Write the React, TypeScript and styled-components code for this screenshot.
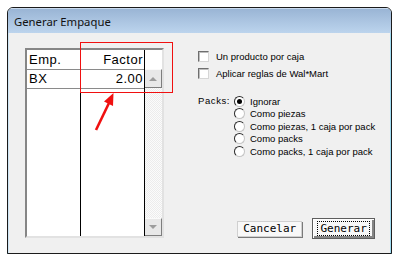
import styled, { createGlobalStyle } from 'styled-components';

const GlobalStyle = createGlobalStyle`
    body {
        margin: 0;
        background: #ffffff;
    }
`;

const packOptions = [
    'Ignorar',
    'Como piezas',
    'Como piezas, 1 caja por pack',
    'Como packs',
    'Como packs, 1 caja por pack',
];

const App = () => {
    return (
        <>
            <GlobalStyle />
            <Window>
                <TitleBar>Generar Empaque</TitleBar>
                <Body>
                    <Grid>
                        <Column width={54}>
                            <HeaderCell>Emp.</HeaderCell>
                            <RowCell>BX</RowCell>
                        </Column>
                        <Column width={64} align="right">
                            <HeaderCell>Factor</HeaderCell>
                            <RowCell>2.00</RowCell>
                        </Column>
                        <ScrollBar>
                            <ScrollCap />
                            <ScrollButton height={19}>
                                <Arrow />
                            </ScrollButton>
                            <ScrollTrack />
                            <ScrollButton height={18}>
                                <Arrow down />
                            </ScrollButton>
                        </ScrollBar>
                    </Grid>

                    <Options>
                        <CheckRow>
                            <CheckBox />
                            <Label>Un producto por caja</Label>
                        </CheckRow>
                        <CheckRow>
                            <CheckBox />
                            <Label>Aplicar reglas de Wal*Mart</Label>
                        </CheckRow>

                        <PacksGroup>
                            <PacksLabel>Packs:</PacksLabel>
                            <RadioList>
                                {packOptions.map((option, i) => (
                                    <RadioRow key={option}>
                                        <Radio checked={i === 0} />
                                        <Label>{option}</Label>
                                    </RadioRow>
                                ))}
                            </RadioList>
                        </PacksGroup>

                        <ButtonRow>
                            <Button>Cancelar</Button>
                            <DefaultButton>
                                <FocusRing>Generar</FocusRing>
                            </DefaultButton>
                        </ButtonRow>
                    </Options>

                    <Highlight />
                    <Pointer width="24" height="42" viewBox="0 0 24 42">
                        <line x1="3" y1="39" x2="16" y2="12" stroke="#f01010" strokeWidth="2.6" />
                        <polygon points="20.5,2 20,15 11,10.5" fill="#f01010" />
                    </Pointer>
                </Body>
            </Window>
        </>
    );
};

const Window = styled.div`
    margin: 7px 0 0 7px;
    width: 385px;
    height: 247px;
    box-sizing: border-box;
    border: 1px solid #1b1b1b;
    border-radius: 6px 6px 0 0;
    overflow: hidden;
    box-shadow: 0 1px 0 #3fb6e2;
    background: #f0f0f0;
`;

const TitleBar = styled.div`
    height: 25px;
    display: flex;
    align-items: center;
    padding-left: 6px;
    background: linear-gradient(#9ab5d5, #bcd4ed);
    border-top: 1px solid #c9daee;
    box-sizing: border-box;
    font-family: 'Noto Sans', 'Open Sans', sans-serif;
    font-size: 11.3px;
    color: #111;
`;

const Body = styled.div`
    position: relative;
    height: 220px;
    box-sizing: border-box;
    display: flex;
    padding: 15px 21px 14px 17px;
    background: #f0f0f0;
    box-shadow: inset 1px 0 0 #cfe6f5, inset -1px 0 0 #9fdcf2;
`;

const Grid = styled.div`
    width: 139px;
    height: 190px;
    box-sizing: border-box;
    flex-shrink: 0;
    display: flex;
    background: #fff;
    border: 2px solid;
    border-color: #868686 #e2e2e2 #e2e2e2 #868686;
`;

const Column = styled.div<{ width: number; align?: string }>`
    width: ${(p) => p.width}px;
    box-sizing: border-box;
    border-right: 1px solid #000;
    display: flex;
    flex-direction: column;
    text-align: ${(p) => p.align || 'left'};
    font-family: 'Liberation Sans', Arial, sans-serif;
    font-size: 13px;
    letter-spacing: 0.5px;
    color: #000;
`;

const HeaderCell = styled.div`
    height: 20px;
    box-sizing: border-box;
    border-bottom: 1px solid #8a8a8a;
    padding: 0 1px 0 2px;
    line-height: 19px;
`;

const RowCell = styled.div`
    height: 19px;
    box-sizing: border-box;
    border-bottom: 1px solid #8a8a8a;
    padding: 0 1px 0 2px;
    line-height: 18px;
`;

const ScrollBar = styled.div`
    width: 17px;
    display: flex;
    flex-direction: column;
`;

const ScrollCap = styled.div`
    height: 19px;
    background: #fff;
`;

const ScrollButton = styled.div<{ height: number }>`
    height: ${(p) => p.height}px;
    box-sizing: border-box;
    background: #e8e8e8;
    border-right: 1px solid #7e7e7e;
    border-bottom: 1px solid #7e7e7e;
    border-top: 1px solid #fafafa;
    display: flex;
    align-items: center;
    justify-content: center;
`;

const Arrow = styled.span<{ down?: boolean }>`
    width: 0;
    height: 0;
    border-left: 4px solid transparent;
    border-right: 4px solid transparent;
    ${(p) => (p.down ? 'border-top: 4px solid #9c9c9c;' : 'border-bottom: 4px solid #9c9c9c;')}
`;

const ScrollTrack = styled.div`
    flex: 1;
    background-color: #fbfbfb;
    background-image: repeating-conic-gradient(#ececec 0 25%, #fbfbfb 0 50%);
    background-size: 2px 2px;
`;

const Options = styled.div`
    flex: 1;
    margin-left: 34px;
    display: flex;
    flex-direction: column;
`;

const CheckRow = styled.div`
    height: 17px;
    display: flex;
    align-items: center;
    gap: 7px;
`;

const CheckBox = styled.span`
    width: 11px;
    height: 11px;
    box-sizing: border-box;
    background: #fff;
    border: 1px solid;
    border-color: #6e6e6e #d6d6d6 #d6d6d6 #6e6e6e;
    box-shadow: inset 1px 1px 0 #bdbdbd;
`;

const Label = styled.span`
    font-family: 'Liberation Sans', Arial, sans-serif;
    font-size: 9.5px;
    color: #000;
    white-space: nowrap;
`;

const PacksGroup = styled.div`
    margin-top: 12.7px;
    display: flex;
`;

const PacksLabel = styled.div`
    width: 36px;
    height: 12.6px;
    line-height: 12.6px;
    font-family: 'Liberation Sans', Arial, sans-serif;
    font-size: 9.5px;
    letter-spacing: 0.6px;
`;

const RadioList = styled.div`
    display: flex;
    flex-direction: column;
`;

const RadioRow = styled.div`
    height: 12.65px;
    display: flex;
    align-items: center;
    gap: 5px;
`;

const Radio = styled.span<{ checked?: boolean }>`
    width: 11px;
    height: 11px;
    box-sizing: border-box;
    border-radius: 50%;
    background: #fff;
    border: 1px solid;
    border-color: #2a2a2a #c4c4c4 #c4c4c4 #2a2a2a;
    display: flex;
    align-items: center;
    justify-content: center;

    &::after {
        content: '';
        width: 5px;
        height: 5px;
        border-radius: 50%;
        background: ${(p) => (p.checked ? '#000' : 'transparent')};
    }
`;

const ButtonRow = styled.div`
    margin-top: auto;
    display: flex;
    justify-content: flex-end;
    align-items: center;
    gap: 10px;
`;

const Button = styled.div`
    width: 65px;
    height: 16px;
    box-sizing: border-box;
    background: #f8f8f8;
    border: 1px solid #d0d0d0;
    box-shadow: 1px 1px 0 #7a7a7a;
    display: flex;
    align-items: center;
    justify-content: center;
    font-family: 'DejaVu Sans Mono', monospace;
    font-size: 11px;
    color: #000;
`;

const DefaultButton = styled.div`
    width: 63px;
    height: 21px;
    box-sizing: border-box;
    background: #f8f8f8;
    border: 1px solid #5e5e5e;
    box-shadow: inset 1px 1px 0 #ffffff, inset -2px -2px 0 #858585;
    display: flex;
    align-items: center;
    justify-content: center;
    font-family: 'DejaVu Sans Mono', monospace;
    font-size: 11px;
    color: #000;
`;

const FocusRing = styled.span`
    padding: 0 2px;
    line-height: 13px;
    outline: 1px dotted #000;
`;

const Highlight = styled.div`
    position: absolute;
    left: 72px;
    top: 9px;
    width: 93px;
    height: 51px;
    box-sizing: border-box;
    border: 1px solid #f01010;
`;

const Pointer = styled.svg`
    position: absolute;
    left: 85px;
    top: 58px;
`;

export default App;
